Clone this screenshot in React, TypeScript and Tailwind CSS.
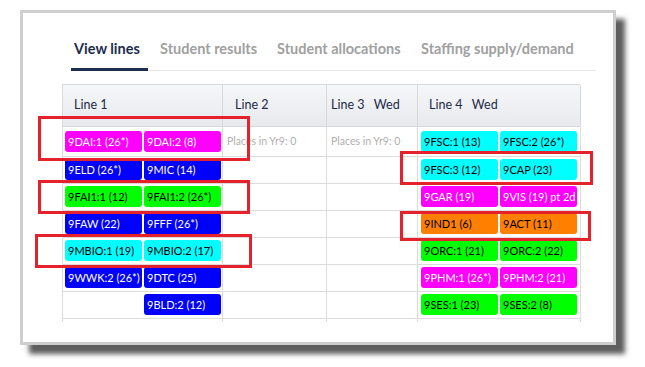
type Chip = { label: string; color: 'mag' | 'blue' | 'green' | 'cyan' | 'orange' } | null;

const chipStyles = {
  mag: 'bg-[#ff00ff] text-white',
  blue: 'bg-[#0000ff] text-white',
  green: 'bg-[#00ff00] text-black',
  cyan: 'bg-[#00ffff] text-black',
  orange: 'bg-[#ff8000] text-black',
};

const rows: { line1: Chip[]; line4: Chip[]; places?: boolean }[] = [
  {
    line1: [{ label: '9DAI:1 (26*)', color: 'mag' }, { label: '9DAI:2 (8)', color: 'mag' }],
    line4: [{ label: '9FSC:1 (13)', color: 'cyan' }, { label: '9FSC:2 (26*)', color: 'cyan' }],
    places: true,
  },
  {
    line1: [{ label: '9ELD (26*)', color: 'blue' }, { label: '9MIC (14)', color: 'blue' }],
    line4: [{ label: '9FSC:3 (12)', color: 'cyan' }, { label: '9CAP (23)', color: 'cyan' }],
  },
  {
    line1: [{ label: '9FAI1:1 (12)', color: 'green' }, { label: '9FAI1:2 (26*)', color: 'green' }],
    line4: [{ label: '9GAR (19)', color: 'mag' }, { label: '9VIS (19) pt 2d', color: 'mag' }],
  },
  {
    line1: [{ label: '9FAW (22)', color: 'blue' }, { label: '9FFF (26*)', color: 'blue' }],
    line4: [{ label: '9IND1 (6)', color: 'orange' }, { label: '9ACT (11)', color: 'orange' }],
  },
  {
    line1: [{ label: '9MBIO:1 (19)', color: 'cyan' }, { label: '9MBIO:2 (17)', color: 'cyan' }],
    line4: [{ label: '9ORC:1 (21)', color: 'green' }, { label: '9ORC:2 (22)', color: 'green' }],
  },
  {
    line1: [{ label: '9WWK:2 (26*)', color: 'blue' }, { label: '9DTC (25)', color: 'blue' }],
    line4: [{ label: '9PHM:1 (26*)', color: 'mag' }, { label: '9PHM:2 (21)', color: 'mag' }],
  },
  {
    line1: [null, { label: '9BLD:2 (12)', color: 'blue' }],
    line4: [{ label: '9SES:1 (23)', color: 'green' }, { label: '9SES:2 (8)', color: 'green' }],
  },
];

function ChipBox({ chip }: { chip: Chip }) {
  if (!chip) return <div className="w-[77px] shrink-0" />;
  return (
    <div
      className={`flex h-[21px] w-[77px] shrink-0 items-center overflow-hidden rounded-[3px] pl-[3px] text-[11px] leading-none whitespace-nowrap ${chipStyles[chip.color]}`}
    >
      {chip.label}
    </div>
  );
}

function Annotation({ className }: { className: string }) {
  return <div className={`pointer-events-none absolute border-[3px] border-[#e5222b] ${className}`} />;
}

const tabs = [
  { label: 'View lines', w: 'w-[89px]' },
  { label: 'Student results', w: 'w-[117px]' },
  { label: 'Student allocations', w: 'w-[144px]' },
  { label: 'Staffing supply/demand', w: 'w-[175px]' },
];

export default function App() {
  return (
    <div className="relative h-[367px] w-[645px] bg-white font-['Lato',sans-serif]">
      {/* framed screenshot card */}
      <div className="ml-[20px] pt-[10px]">
        <div className="h-[335px] w-[596px] border-[3px] border-[#cfcfcf] bg-white shadow-[9px_9px_5px_rgba(40,40,40,0.75)]">
          <nav className="ml-[48px] mt-[25px] flex h-[33px] w-[525px] border-b border-[#e6e6e6] text-[14.5px] font-bold whitespace-nowrap">
            {tabs.map((tab, i) => (
              <div key={tab.label} className={`${tab.w} shrink-0`}>
                {i === 0 ? (
                  <div className="inline-block h-[33px] w-[77px] border-b-[3px] border-[#1d2d4d] pl-[3px] text-[#1d2d4d]">
                    {tab.label}
                  </div>
                ) : (
                  <span className="text-[#a0a0a0]">{tab.label}</span>
                )}
              </div>
            ))}
          </nav>

          <div className="ml-[39px] mt-[13px] w-[518px]">
            {/* header */}
            <div className="grid h-[43px] grid-cols-[160px_104px_91px_163px] border-y border-l border-[#d6d8dc] bg-gradient-to-b from-[#f6f7f9] to-[#e7e9ed] text-[12.5px] text-[#1c2a47]">
              <div className="flex items-center border-r border-[#d6d8dc] pl-[11px]">Line 1</div>
              <div className="flex items-center border-r border-[#d6d8dc] pl-[12px]">Line 2</div>
              <div className="flex items-center border-r border-[#d6d8dc] pl-[4px]">Line 3&nbsp;&nbsp;&nbsp;Wed</div>
              <div className="flex items-center border-r border-[#d6d8dc] pl-[11px]">Line 4&nbsp;&nbsp;&nbsp;Wed</div>
            </div>

            {/* rows */}
            {rows.map((row, r) => (
              <div
                key={r}
                className={`grid grid-cols-[160px_104px_91px_163px] border-l border-[#dcdcdc] ${r === 0 ? 'h-[30px]' : 'h-[27px]'}`}
              >
                <div
                  className={`flex border-r border-b border-[#dcdcdc] ${r === 0 ? 'pt-[4px]' : 'pt-[2px]'} ${r === 6 ? 'gap-0 pl-[4px]' : 'gap-[2px] pl-[2px]'}`}
                >
                  <ChipBox chip={row.line1[0]} />
                  <ChipBox chip={row.line1[1]} />
                </div>
                <div className="flex items-center border-r border-b border-[#dcdcdc] pl-[4px] text-[10.5px] whitespace-nowrap text-[#b0b0b0]">
                  {row.places ? 'Places in Yr9: 0' : ''}
                </div>
                <div className="flex items-center border-r border-b border-[#dcdcdc] pl-[4px] text-[10.5px] whitespace-nowrap text-[#b0b0b0]">
                  {row.places ? 'Places in Yr9: 0' : ''}
                </div>
                <div className={`flex gap-[2px] border-r border-b border-[#dcdcdc] pl-[3px] ${r === 0 ? 'pt-[4px]' : 'pt-[2px]'}`}>
                  <ChipBox chip={row.line4[0]} />
                  <ChipBox chip={row.line4[1]} />
                </div>
              </div>
            ))}
            <div className="grid h-[3px] grid-cols-[160px_104px_91px_163px] border-l border-[#dcdcdc]">
              <div className="border-r border-[#dcdcdc]" />
              <div className="border-r border-[#dcdcdc]" />
              <div className="border-r border-[#dcdcdc]" />
              <div className="border-r border-[#dcdcdc]" />
            </div>
          </div>
        </div>
      </div>

      {/* red annotation boxes */}
      <Annotation className="left-[38px] top-[116px] h-[45px] w-[212px]" />
      <Annotation className="left-[38px] top-[180px] h-[34px] w-[212px]" />
      <Annotation className="left-[35px] top-[234px] h-[34px] w-[217px]" />
      <Annotation className="left-[400px] top-[151px] h-[34px] w-[193px]" />
      <Annotation className="left-[400px] top-[211px] h-[30px] w-[191px]" />
    </div>
  );
}
